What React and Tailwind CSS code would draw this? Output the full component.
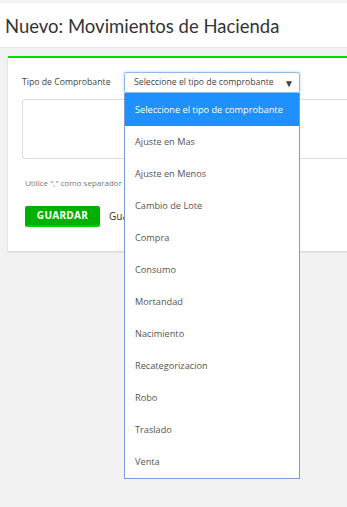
const opciones = [
  'Ajuste en Mas',
  'Ajuste en Menos',
  'Cambio de Lote',
  'Compra',
  'Consumo',
  'Mortandad',
  'Nacimiento',
  'Recategorizacion',
  'Robo',
  'Traslado',
  'Venta',
]

function Dropdown() {
  return (
    <div className="absolute left-0 top-[21px] w-[176px] bg-white border border-t-0 border-[#7b9bd6] z-10">
      <div className="h-[33px] flex items-center pl-[10px] bg-[#1e90ff] text-white text-[9.2px]">
        Seleccione el tipo de comprobante
      </div>
      {opciones.map((o) => (
        <div key={o} className="h-[32px] flex items-center pl-[10px] text-[#555] text-[9.2px]">
          {o}
        </div>
      ))}
    </div>
  )
}

export default function App() {
  return (
    <div className="w-[347px] h-[507px] overflow-hidden bg-[#f2f2f2] font-['Open_Sans',sans-serif]">
      <div className="mt-[3px] h-[45px] bg-white flex items-center pl-[5px] pt-[2px] border-b border-[#e6e6e6]">
        <h1 className="font-['Lato',sans-serif] text-[18.5px] text-[#333] leading-none">
          Nuevo: Movimientos de Hacienda
        </h1>
      </div>
      <div className="pl-[8px] pt-[8px]">
        <div className="w-[400px] bg-white border-t-2 border-[#00dd00] shadow-[0_1px_2px_rgba(0,0,0,0.15)] pt-[14px] pl-[14px] pb-[24px]">
          <div className="flex items-center h-[21px]">
            <label className="w-[102px] text-[8.7px] text-[#444]">Tipo de Comprobante</label>
            <div className="relative w-[176px] h-[21px]">
              <div className="h-full border border-[#8fbbe8] rounded-[2px] shadow-[0_0_3px_rgba(102,175,233,0.5)] flex items-center pl-[9px] pr-[5px] text-[8.7px] text-[#444]">
                <span className="flex-1">Seleccione el tipo de comprobante</span>
                <span className="text-[10px] leading-none text-[#444]">▼</span>
              </div>
              <Dropdown />
            </div>
          </div>
          <div className="mt-[6px] w-[380px] h-[60px] border border-[#dcdcdc] rounded-[3px]" />
          <p className="mt-[18px] pl-[3px] text-[8px] text-[#777] leading-[12px]">
            Utilice "," como separador
          </p>
          <div className="mt-[17px] pl-[3px] flex items-center">
            <button className="w-[75px] h-[21px] bg-[#00b000] border-b-2 border-[#00d000] rounded-[2px] text-white font-bold text-[10px] tracking-[0.3px]">
              GUARDAR
            </button>
            <span className="ml-[9px] text-[10px] text-[#333]">Guardar</span>
          </div>
        </div>
      </div>
    </div>
  )
}
